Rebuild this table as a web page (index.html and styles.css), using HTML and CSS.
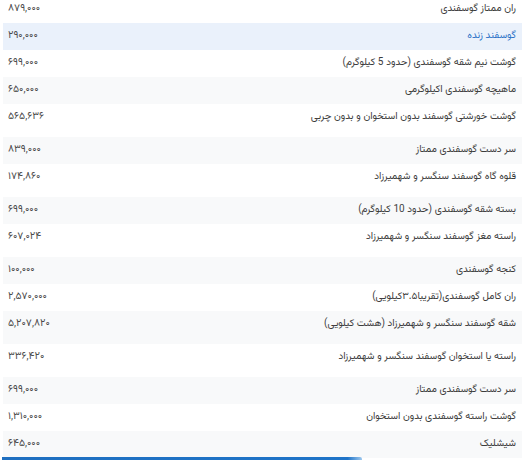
FILE: index.html
```html
<!DOCTYPE html>
<html lang="fa">
<head>
<meta charset="utf-8">
<link rel="stylesheet" href="styles.css">
</head>
<body>
<div class="wrap">
<table class="prices" dir="rtl">
<tbody>
<tr class="first"><td class="name">ران ممتاز گوسفندی</td><td class="price">۸۷۹,۰۰۰</td></tr>
<tr class="active"><td class="name">گوسفند زنده</td><td class="price">۲۹۰,۰۰۰</td></tr>
<tr><td class="name">گوشت نیم شقه گوسفندی (حدود 5 کیلوگرم)</td><td class="price">۶۹۹,۰۰۰</td></tr>
<tr class="odd"><td class="name">ماهیچه گوسفندی اکیلوگرمی</td><td class="price">۶۵۰,۰۰۰</td></tr>
<tr class="tall"><td class="name">گوشت خورشتی گوسفند بدون استخوان و بدون چربی</td><td class="price">۵۶۵,۶۳۶</td></tr>
<tr class="odd"><td class="name">سر دست گوسفندی ممتاز</td><td class="price">۸۳۹,۰۰۰</td></tr>
<tr class="tall"><td class="name">قلوه گاه گوسفند سنگسر و شهمیرزاد</td><td class="price">۱۷۴,۸۶۰</td></tr>
<tr class="odd"><td class="name">بسته شقه گوسفندی (حدود 10 کیلوگرم)</td><td class="price">۶۹۹,۰۰۰</td></tr>
<tr class="tall"><td class="name">راسته مغز گوسفند سنگسر و شهمیرزاد</td><td class="price">۶۰۷,۰۲۴</td></tr>
<tr class="odd"><td class="name">کنجه گوسفندی</td><td class="price">۱۰۰,۰۰۰</td></tr>
<tr><td class="name">ران کامل گوسفندی(تقریبا۳.۵کیلویی)</td><td class="price">۲,۵۷۰,۰۰۰</td></tr>
<tr class="odd tall"><td class="name">شقه گوسفند سنگسر و شهمیرزاد (هشت کیلویی)</td><td class="price">۵,۲۰۷,۸۲۰</td></tr>
<tr class="tall"><td class="name">راسته یا استخوان گوسفند سنگسر و شهمیرزاد</td><td class="price">۳۳۶,۴۲۰</td></tr>
<tr class="odd"><td class="name">سر دست گوسفندی ممتاز</td><td class="price">۶۹۹,۰۰۰</td></tr>
<tr><td class="name">گوشت راسته گوسفندی بدون استخوان</td><td class="price">۱,۳۱۰,۰۰۰</td></tr>
<tr class="odd"><td class="name">شیشلیک</td><td class="price">۶۴۵,۰۰۰</td></tr>
</tbody>
</table>
<div class="bar"></div>
</div>
</body>
</html>
```

FILE: styles.css
```css
html, body {
  margin: 0;
  padding: 0;
  background: #ffffff;
}
.wrap {
  padding-left: 3px;
  font-family: "Vazirmatn", "Vazir", "Noto Sans Arabic", "Noto Naskh Arabic", "DejaVu Sans", sans-serif;
  font-size: 10px;
  color: #3c3c3c;
}
.prices {
  width: 100%;
  border-collapse: collapse;
}
.prices td {
  height: 27px;
  box-sizing: border-box;
  padding: 6px 6px 0 6px;
  line-height: 14px;
  vertical-align: top;
  white-space: nowrap;
}
.prices .name {
  text-align: right;
}
.prices .price {
  text-align: left;
  padding-left: 5px;
  font-size: 10.3px;
  color: #4a4a4a;
}
.prices tr.first td {
  height: 23px;
  padding-top: 2px;
}
.prices tr.tall td {
  height: 33px;
}
.prices tr.odd td {
  background: #f8f9fa;
}
.prices tr.active td {
  background: #eaf1fb;
}
.prices tr.active .name {
  color: #2f74c8;
}
.bar {
  width: 360px;
  height: 3px;
  margin-top: -1px;
  margin-left: -1px;
  background: linear-gradient(to right, #1f6fc0 0%, #1f74c8 96%, #9cc7ee 100%);
  border-top-right-radius: 2px;
}
```
